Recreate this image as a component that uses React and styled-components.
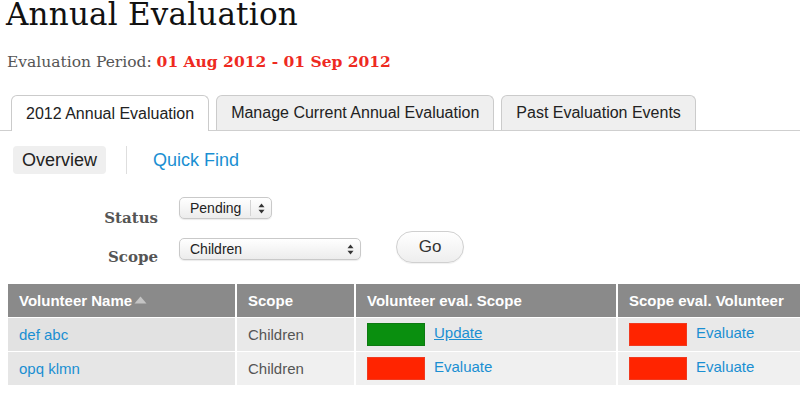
import React from "react";
import styled, { createGlobalStyle } from "styled-components";

const Global = createGlobalStyle`
  html, body { margin: 0; padding: 0; background: #fff; overflow: hidden; }
  body { font-family: "Liberation Sans", Arial, sans-serif; }
`;

const Page = styled.div`
  width: 800px;
  height: 397px;
  overflow: hidden;
`;

const Title = styled.h1`
  margin: 0;
  padding-left: 6px;
  font-family: "DejaVu Serif", Georgia, serif;
  font-weight: normal;
  font-size: 31px;
  line-height: 28px;
  height: 28px;
  color: #111;
  letter-spacing: 0.2px;
`;

const Period = styled.div`
  padding-left: 7px;
  margin-top: 24px;
  font-family: "DejaVu Serif", Georgia, serif;
  font-size: 15.5px;
  line-height: 20px;
  color: #555;
`;

const Dates = styled.span`
  color: #ee2a1f;
  font-weight: bold;
`;

const TabBar = styled.div`
  display: flex;
  gap: 7px;
  margin-top: 23px;
  padding-left: 11px;
  border-bottom: 1px solid #cfcfcf;
  height: 35px;
`;

const Tab = styled.div`
  box-sizing: border-box;
  padding: 0 14px;
  display: flex;
  align-items: center;
  font-size: 16px;
  color: #222;
  border: 1px solid #cbcbcb;
  border-bottom: none;
  border-radius: 6px 6px 0 0;
  background: ${(p) => (p.$active ? "#fff" : "#efefef")};
  height: ${(p) => (p.$active ? "36px" : "35px")};
`;

const SubNav = styled.div`
  display: flex;
  align-items: center;
  margin-top: 14px;
  padding-left: 13px;
  height: 30px;
`;

const Pill = styled.div`
  height: 28px;
  padding: 0 9px;
  display: flex;
  align-items: center;
  font-size: 18px;
  color: #222;
  background: #efefef;
  border-radius: 4px;
`;

const Divider = styled.div`
  width: 1px;
  height: 28px;
  background: #dedede;
  margin: 0 26px 0 20px;
`;

const NavLink = styled.a`
  font-size: 18px;
  color: #1a8fd2;
  text-decoration: none;
`;

const Form = styled.div`
  display: grid;
  grid-template-columns: 158px auto auto 1fr;
  column-gap: 21px;
  row-gap: 16px;
  margin-top: 22px;
  align-items: center;
`;

const Label = styled.div`
  justify-self: end;
  align-self: end;
  margin-bottom: -${(p) => p.$drop}px;
  font-family: "DejaVu Serif", Georgia, serif;
  font-weight: bold;
  font-size: 15px;
  line-height: 18px;
  color: #555;
`;

const Select = styled.div`
  position: relative;
  width: ${(p) => p.$w}px;
  height: 22px;
  box-sizing: border-box;
  border: 1px solid #c9c9c9;
  border-radius: 5px;
  background: linear-gradient(#ffffff, #ececec);
  box-shadow: 0 1px 1px rgba(0, 0, 0, 0.08);
  display: flex;
  align-items: center;
  padding-left: 10px;
  font-size: 14px;
  color: #222;
  justify-self: start;
`;

const Arrows = styled.div`
  position: absolute;
  right: 0;
  top: 2px;
  bottom: 2px;
  width: 20px;
  border-left: ${(p) => (p.$sep ? "1px solid #d4d4d4" : "none")};
  display: flex;
  align-items: center;
  justify-content: center;
`;

const GoButton = styled.div`
  width: 68px;
  height: 32px;
  box-sizing: border-box;
  border: 1px solid #d0d0d0;
  border-radius: 16px;
  background: linear-gradient(#ffffff, #eeeeee);
  box-shadow: 0 1px 1px rgba(0, 0, 0, 0.06);
  display: flex;
  align-items: center;
  justify-content: center;
  font-size: 17px;
  color: #333;
  margin: -4px 0 0 14px;
  justify-self: start;
`;

const Table = styled.table`
  margin-top: 20px;
  margin-left: 6px;
  border-collapse: separate;
  border-spacing: 2px 1px;
  table-layout: fixed;
  width: 800px;
`;

const Th = styled.th`
  background: #8a8a8a;
  color: #fff;
  font-size: 15px;
  font-weight: bold;
  text-align: left;
  height: 33px;
  padding: 0 0 0 11px;
  white-space: nowrap;
`;

const Td = styled.td`
  height: 33px;
  padding: 0 0 0 11px;
  font-size: 15px;
  color: #555;
  white-space: nowrap;
  background: ${(p) => (p.$sorted ? (p.$odd ? "#e2e2e2" : "#e6e6e6") : p.$odd ? "#e9e9e9" : "#f0f0f0")};
`;

const CellLink = styled.a`
  color: #1a8fd2;
  text-decoration: ${(p) => (p.$underline ? "underline" : "none")};
`;

const Status = styled.span`
  display: inline-block;
  width: 58px;
  height: 23px;
  vertical-align: middle;
  margin-right: 9px;
  background: ${(p) => (p.$ok ? "#0a8f0f" : "#ff2400")};
  border: 1px solid ${(p) => (p.$ok ? "#0d7a12" : "#f03a20")};
  box-sizing: border-box;
`;

const SortIcon = styled.svg`
  margin-left: 2px;
  vertical-align: 2px;
`;

const ArrowIcon = () => (
  <svg width="7" height="11" viewBox="0 0 7 11">
    <path d="M3.5 0.5 L6.5 4.2 L0.5 4.2 Z" fill="#333" />
    <path d="M3.5 10.5 L6.5 6.8 L0.5 6.8 Z" fill="#333" />
  </svg>
);

const rows = [
  { name: "def abc", scope: "Children", vs: { ok: true, label: "Update", u: true }, sv: { ok: false, label: "Evaluate" } },
  { name: "opq klmn", scope: "Children", vs: { ok: false, label: "Evaluate" }, sv: { ok: false, label: "Evaluate" } },
];

export default function App() {
  return (
    <Page>
      <Global />
      <Title>Annual Evaluation</Title>
      <Period>
        Evaluation Period: <Dates>01 Aug 2012 - 01 Sep 2012</Dates>
      </Period>
      <TabBar>
        <Tab $active>2012 Annual Evaluation</Tab>
        <Tab>Manage Current Annual Evaluation</Tab>
        <Tab>Past Evaluation Events</Tab>
      </TabBar>
      <SubNav>
        <Pill>Overview</Pill>
        <Divider />
        <NavLink>Quick Find</NavLink>
      </SubNav>
      <Form>
        <Label $drop={8}>Status</Label>
        <Select $w={93}>
          Pending
          <Arrows $sep>
            <ArrowIcon />
          </Arrows>
        </Select>
        <div />
        <div />
        <Label $drop={3}>Scope</Label>
        <Select $w={182}>
          Children
          <Arrows>
            <ArrowIcon />
          </Arrows>
        </Select>
        <GoButton>Go</GoButton>
        <div />
      </Form>
      <Table>
        <colgroup>
          <col style={{ width: 227 }} />
          <col style={{ width: 117 }} />
          <col style={{ width: 260 }} />
          <col style={{ width: 200 }} />
        </colgroup>
        <thead>
          <tr>
            <Th>
              Volunteer Name
              <SortIcon width="13" height="8" viewBox="0 0 13 8">
                <path d="M6.5 0.5 L12.5 7.5 L0.5 7.5 Z" fill="#c4c4c4" />
              </SortIcon>
            </Th>
            <Th>Scope</Th>
            <Th>Volunteer eval. Scope</Th>
            <Th>Scope eval. Volunteer</Th>
          </tr>
        </thead>
        <tbody>
          {rows.map((r, i) => (
            <tr key={r.name}>
              <Td $sorted $odd={i === 0}>
                <CellLink>{r.name}</CellLink>
              </Td>
              <Td $odd={i === 0}>{r.scope}</Td>
              <Td $odd={i === 0}>
                <Status $ok={r.vs.ok} />
                <CellLink $underline={r.vs.u}>{r.vs.label}</CellLink>
              </Td>
              <Td $odd={i === 0}>
                <Status $ok={r.sv.ok} />
                <CellLink>{r.sv.label}</CellLink>
              </Td>
            </tr>
          ))}
        </tbody>
      </Table>
    </Page>
  );
}
